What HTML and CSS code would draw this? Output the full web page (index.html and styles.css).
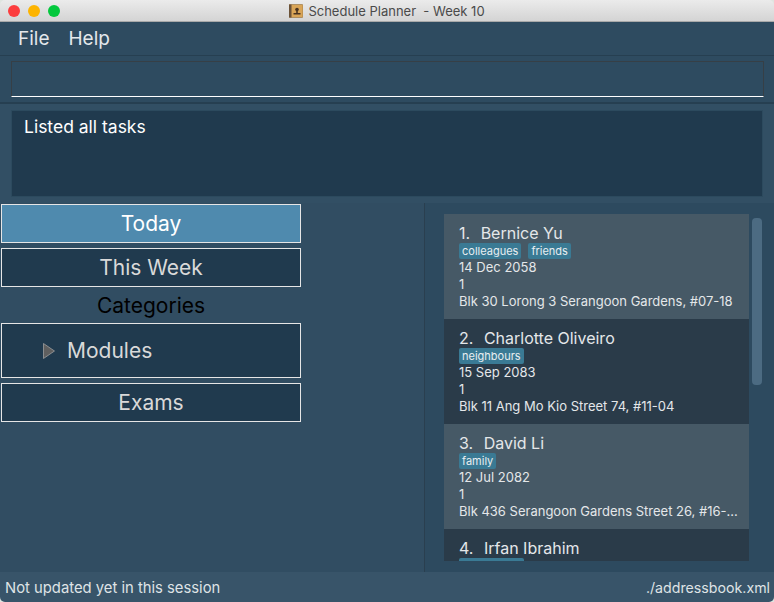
FILE: index.html
```html
<!DOCTYPE html>
<html lang="en">
<head>
  <meta charset="UTF-8" />
  <title>Schedule Planner - Week 10</title>
  <link rel="stylesheet" href="styles.css">
</head>
<body>
  <div class="window">
    <header class="titlebar">
      <div class="lights">
        <span class="light red"></span>
        <span class="light yellow"></span>
        <span class="light green"></span>
      </div>
      <div class="title">
        <svg class="title-icon" width="14" height="14" viewBox="0 0 14 14">
          <rect x="0" y="0.5" width="14" height="13" rx="1" fill="#d9a557" stroke="#8f6d3c" stroke-width="0.6"/>
          <rect x="0" y="0.5" width="2.5" height="13" fill="#6b5238"/>
          <circle cx="8" cy="5.5" r="1.8" fill="#4a3420"/>
          <path d="M7.2 7h1.6v2H11.5v1.5H4.5V9h2.7z" fill="#4a3420"/>
        </svg>
        <span>Schedule Planner &nbsp;- Week 10</span>
      </div>
    </header>

    <nav class="menubar">
      <span class="menu-item">File</span>
      <span class="menu-item">Help</span>
    </nav>

    <section class="command-pane">
      <div class="command-box"></div>
    </section>

    <section class="result-pane">
      <div class="result-box">Listed all tasks</div>
    </section>

    <main class="split">
      <aside class="sidebar">
        <div class="nav-btn active">Today</div>
        <div class="nav-btn">This Week</div>
        <div class="cat-label">Categories</div>
        <div class="nav-btn tree">
          <svg class="arrow" width="12" height="16" viewBox="0 0 12 16"><path d="M0.5 0.5L11.5 8L0.5 15.5z" fill="#5f5f5f" stroke="#a9a9a9" stroke-width="0.7"/></svg>
          <span>Modules</span>
        </div>
        <div class="nav-btn">Exams</div>
      </aside>

      <div class="list-pane">
        <div class="list">
          <article class="card">
            <div class="name"><span class="idx">1.</span> Bernice Yu</div>
            <div class="tags"><span class="tag">colleagues</span><span class="tag">friends</span></div>
            <div class="line">14 Dec 2058</div>
            <div class="line">1</div>
            <div class="line">Blk 30 Lorong 3 Serangoon Gardens, #07-18</div>
          </article>
          <article class="card">
            <div class="name"><span class="idx">2.</span> Charlotte Oliveiro</div>
            <div class="tags"><span class="tag">neighbours</span></div>
            <div class="line">15 Sep 2083</div>
            <div class="line">1</div>
            <div class="line">Blk 11 Ang Mo Kio Street 74, #11-04</div>
          </article>
          <article class="card">
            <div class="name"><span class="idx">3.</span> David Li</div>
            <div class="tags"><span class="tag">family</span></div>
            <div class="line">12 Jul 2082</div>
            <div class="line">1</div>
            <div class="line">Blk 436 Serangoon Gardens Street 26, #16-...</div>
          </article>
          <article class="card">
            <div class="name"><span class="idx">4.</span> Irfan Ibrahim</div>
            <div class="tags"><span class="tag tag-clipped"></span></div>
          </article>
        </div>
        <div class="scroll-track"><div class="scroll-thumb"></div></div>
      </div>
    </main>

    <footer class="statusbar">
      <span class="status-left">Not updated yet in this session</span>
      <span class="status-right">./addressbook.xml</span>
    </footer>
  </div>
</body>
</html>
```

FILE: styles.css
```css
html, body {
  margin: 0;
  height: 100%;
  overflow: hidden;
}
body {
  font-family: Inter, 'Noto Sans', sans-serif;
  background: #dfe5e0;
}
.window {
  width: 774px;
  height: 602px;
  display: flex;
  flex-direction: column;
  overflow: hidden;
  border-radius: 5px;
}
.titlebar {
  height: 21px;
  flex: none;
  display: flex;
  align-items: center;
  position: relative;
  justify-content: center;
  background: linear-gradient(to bottom, #ebebeb, #d4d4d4);
  border-bottom: 1px solid #a9a9a9;
}
.lights {
  position: absolute;
  left: 8px;
  top: 5px;
  display: flex;
  gap: 8px;
}
.light {
  width: 12px;
  height: 12px;
  border-radius: 50%;
}
.red { background: #fc3d3e; }
.yellow { background: #fdb400; }
.green { background: #03c83d; }
.title {
  display: flex;
  align-items: center;
  gap: 5px;
  font-size: 13px;
  color: #4a4a4a;
}
.menubar {
  height: 33px;
  flex: none;
  display: flex;
  align-items: center;
  gap: 19px;
  padding-left: 18px;
  background: #2e4b60;
  border-bottom: 1px solid #263f51;
}
.menu-item {
  font-size: 19px;
  color: #e4e8eb;
}
.command-pane {
  height: 48px;
  flex: none;
  box-sizing: border-box;
  padding: 5px 10px 5px 11px;
  background: #2e4b60;
  border-bottom: 2px solid #263f51;
}
.command-box {
  height: 36px;
  box-sizing: border-box;
  background: #2e4b60;
  border: 1px solid #363f46;
  border-bottom: 1px solid #fff;
}
.result-pane {
  height: 99px;
  flex: none;
  box-sizing: border-box;
  padding: 6px 11px;
  background: #324f64;
}
.result-box {
  height: 87px;
  box-sizing: border-box;
  padding: 6px 12px;
  background: #203a4e;
  border: 1px solid #2c4a5e;
  color: #fff;
  font-size: 17.5px;
  line-height: 20px;
}
.split {
  flex: 1;
  display: flex;
  background: #2f4b60;
  min-height: 0;
}
.sidebar {
  width: 425px;
  flex: none;
  box-sizing: border-box;
  padding: 1px 0 0 1px;
  background: #314d62;
  border-right: 1px solid #2a3f4f;
  display: flex;
  flex-direction: column;
  align-items: flex-start;
}
.nav-btn {
  width: 300px;
  height: 39px;
  flex: none;
  box-sizing: border-box;
  margin-bottom: 5px;
  display: flex;
  align-items: center;
  justify-content: center;
  background: #203a4e;
  border: 1px solid #e6e6e6;
  color: #d9d9d9;
  font-size: 21px;
}
.nav-btn.active {
  background: #4f8aae;
  color: #fff;
}
.cat-label {
  width: 300px;
  height: 36px;
  margin-top: -5px;
  flex: none;
  display: flex;
  align-items: center;
  justify-content: center;
  color: #000;
  font-size: 21px;
}
.nav-btn.tree {
  height: 55px;
  justify-content: flex-start;
  padding-left: 41px;
  gap: 12px;
}
.arrow { flex: none; }
.list-pane {
  flex: 1;
  min-width: 0;
  display: flex;
  padding: 11px 0 11px 19px;
  background: #2d4a5f;
}
.list {
  width: 305px;
  flex: none;
  overflow: hidden;
}
.card {
  height: 105px;
  box-sizing: border-box;
  padding: 9px 8px 0 15px;
  background: #465966;
  color: #e4e7e9;
  font-size: 13px;
  line-height: 17px;
}
.card:nth-child(even) { background: #2a3b49; }
.name {
  font-size: 16px;
  line-height: 20px;
  white-space: nowrap;
}
.idx { margin-right: 6px; }
.tags {
  display: flex;
  gap: 7px;
  height: 16px;
}
.tag {
  height: 16px;
  padding: 0 3px;
  border-radius: 2px;
  background: #3a7a94;
  color: #e8eef1;
  font-size: 11px;
  line-height: 16px;
}
.tag-clipped { width: 59px; }
.line {
  white-space: nowrap;
}
.scroll-track {
  width: 10px;
  margin-left: 3px;
  padding-top: 4px;
}
.scroll-thumb {
  height: 167px;
  border-radius: 4px;
  background: #4c6b82;
}
.statusbar {
  height: 30px;
  flex: none;
  box-sizing: border-box;
  padding: 1px 4px 0 5px;
  display: flex;
  align-items: center;
  justify-content: space-between;
  background: #385469;
  color: #dfe3e6;
}
.status-left { font-size: 14.8px; }
.status-right { font-size: 14.2px; }
```
